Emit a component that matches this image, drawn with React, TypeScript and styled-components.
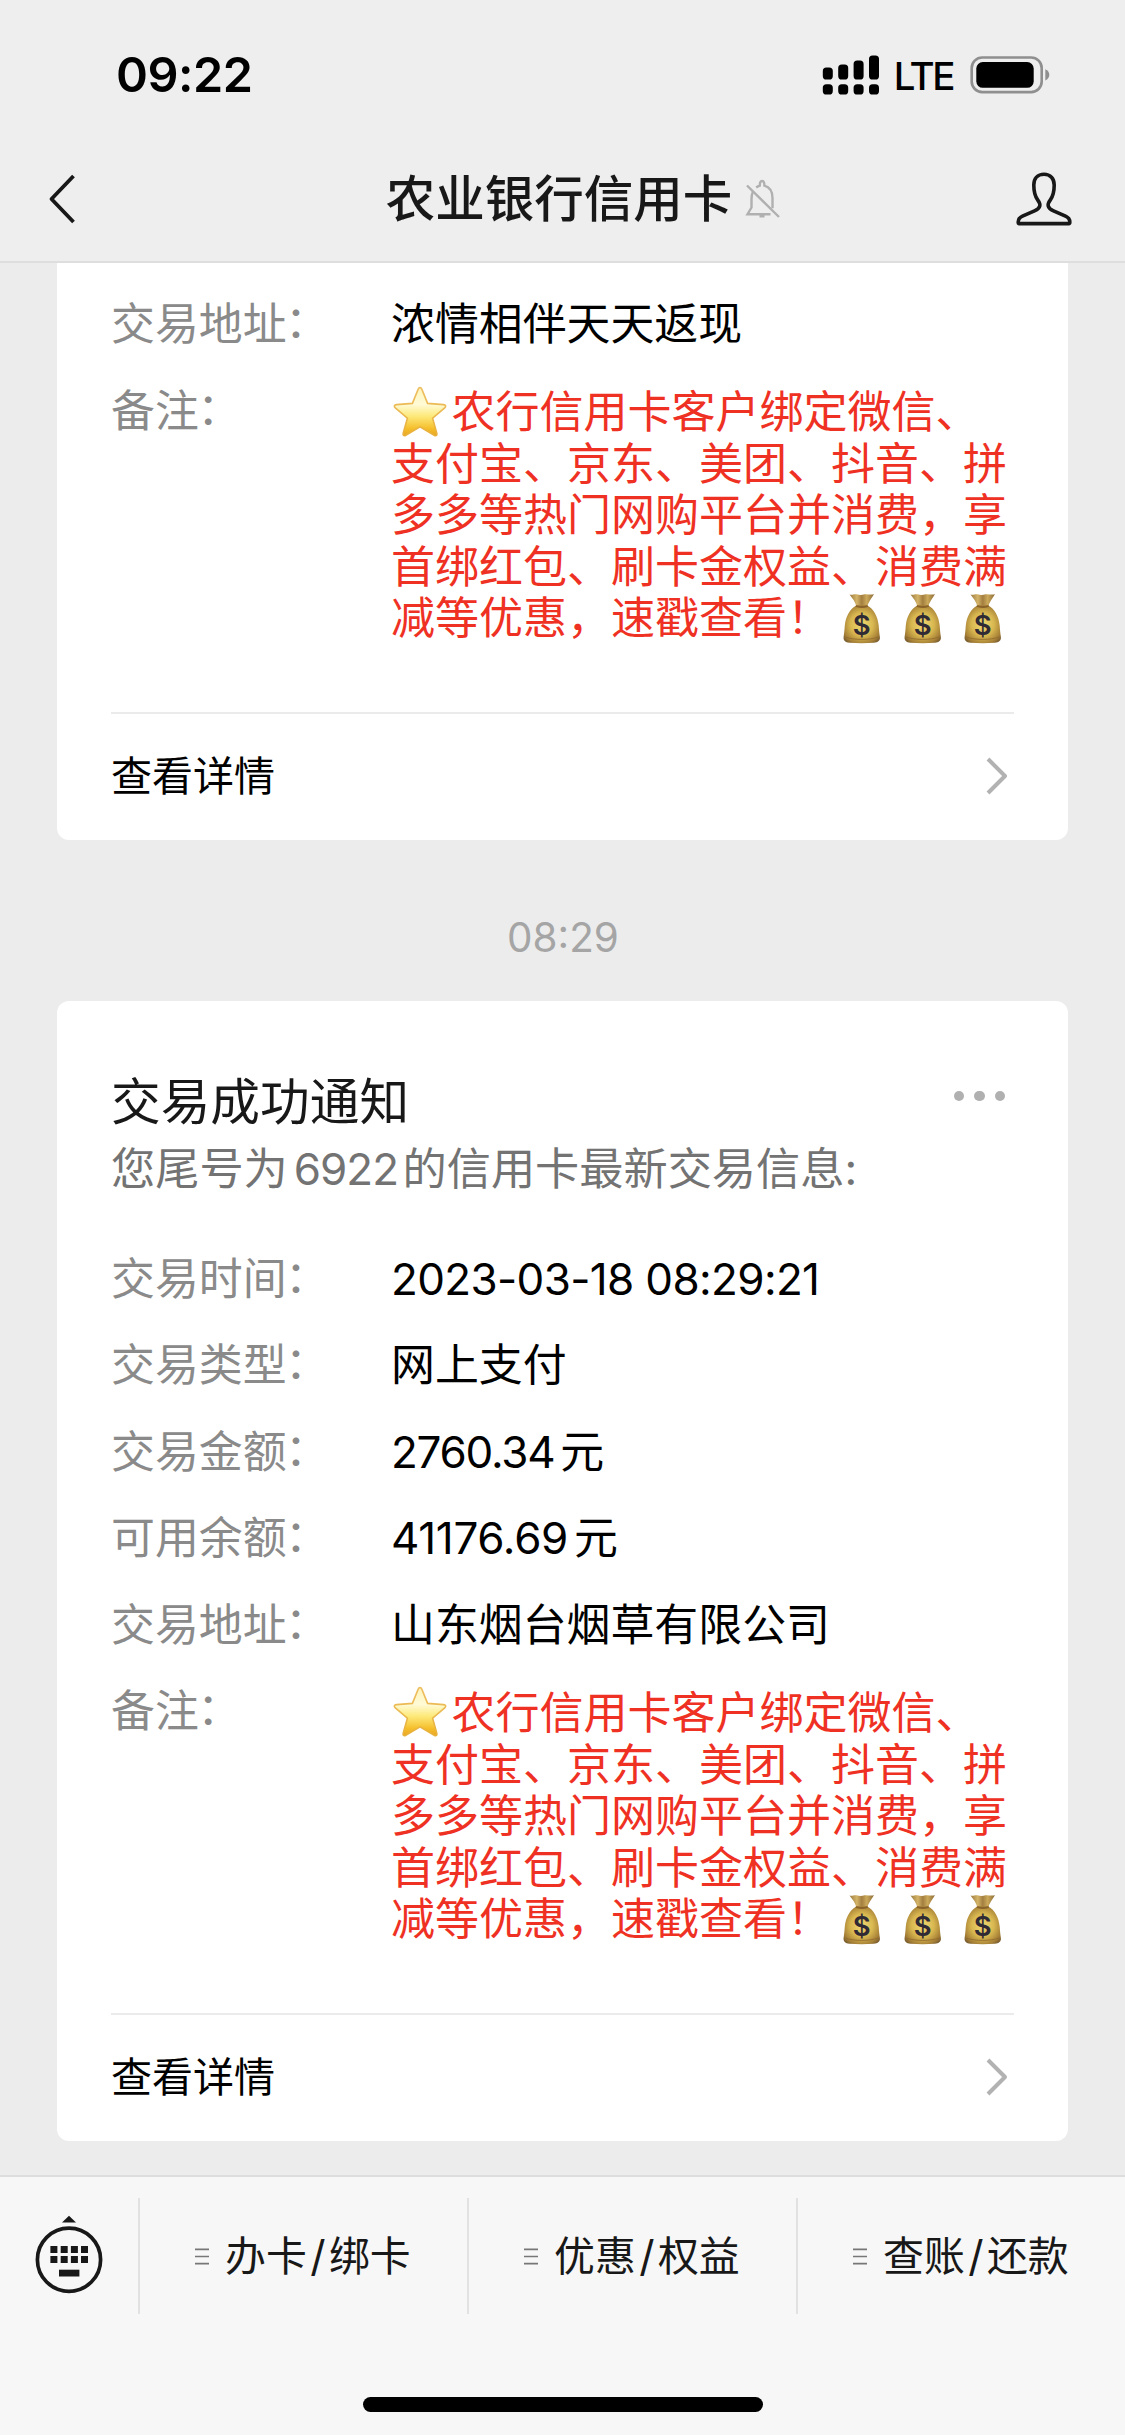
import React from "react";
import styled, { createGlobalStyle } from "styled-components";

const Global = createGlobalStyle`
  * { box-sizing: border-box; }
  html, body { margin: 0; padding: 0; background: #ececec; }
  body {
    font-family: Inter, "Noto Sans CJK SC", sans-serif;
    text-spacing-trim: space-all;
    text-autospace: no-autospace;
    -webkit-font-smoothing: antialiased;
  }
  svg { display: block; flex: none; }
`;

const Screen = styled.div`
  width: 1125px;
  height: 2435px;
  display: flex;
  flex-direction: column;
  background: #ececec;
  overflow: hidden;
`;

const Header = styled.header`
  flex: none;
  height: 263px;
  background: #eeeeee;
  border-bottom: 2px solid #dedede;
`;

const StatusBar = styled.div`
  height: 149px;
  padding: 0 74px 0 116px;
  display: flex;
  align-items: center;
  justify-content: space-between;
`;

const Clock = styled.div`
  font-size: 48.5px;
  font-weight: 600;
  letter-spacing: -0.5px;
  color: #000;
`;

const StatusIcons = styled.div`
  display: flex;
  align-items: center;
`;

const Network = styled.span`
  margin: 2px 17px 0 14px;
  font-size: 38.5px;
  font-weight: 500;
  letter-spacing: -2.4px;
  line-height: 46px;
  color: #000;
`;

const NavBar = styled.nav`
  height: 100px;
  padding: 0 52px 0 48px;
  display: grid;
  grid-template-columns: 100px 1fr 100px;
  align-items: center;
`;

const Title = styled.h1`
  margin: 0;
  display: flex;
  align-items: center;
  justify-content: center;
  gap: 13px;
  padding-left: 46px;
  font-size: 49.5px;
  font-weight: 500;
  line-height: 60px;
  white-space: nowrap;
  color: #181818;
`;

const NavEnd = styled.div`
  display: flex;
  justify-content: flex-end;
`;

const Chat = styled.main`
  flex: 1;
  min-height: 0;
  padding: 0 57px;
`;

const Card = styled.section<{ $cut?: boolean }>`
  background: #fff;
  border-radius: ${(p) => (p.$cut ? "0 0 12px 12px" : "12px")};
  padding: ${(p) => (p.$cut ? "35px" : "68px")} 54px 0;
`;

const Stamp = styled.time`
  display: flex;
  align-items: center;
  justify-content: center;
  height: 161px;
  padding: 36px 0 0 1px;
  font-size: 40.4px;
  line-height: 50px;
  color: #a5a5a5;
`;

const CardHead = styled.div`
  display: flex;
  justify-content: space-between;
  align-items: flex-start;
`;

const CardTitle = styled.h2`
  margin: 0;
  font-size: 49.7px;
  font-weight: 400;
  line-height: 66px;
  color: #181818;
`;

const Dots = styled.div`
  display: flex;
  gap: 10px;
  padding: 22px 9px 0 0;
`;

const Dot = styled.i`
  width: 10.4px;
  height: 10.4px;
  border-radius: 50%;
  background: #b0b0b0;
`;

const Subtitle = styled.p`
  margin: 1px 0 51px;
  font-size: 44.2px;
  line-height: 66px;
  white-space: nowrap;
  color: #737373;
`;

const Rows = styled.dl`
  margin: 0;
  display: flex;
  flex-direction: column;
  gap: 34.5px;
`;

const Row = styled.div`
  display: grid;
  grid-template-columns: 280px 1fr;
  font-size: 43.9px;
  line-height: 52px;
  white-space: nowrap;
`;

const Label = styled.dt`
  color: #8a8a8a;
`;

const Colon = styled.span`
  margin-left: -1.5px;
  line-height: 0;
  vertical-align: 2px;
`;

const Value = styled.dd`
  margin: 0;
  color: #000;
`;

const Memo = styled.dd`
  margin: 2.5px 0 0;
  font-size: 44px;
  line-height: 51.6px;
  color: #ef3124;
`;

const MemoLine = styled.div`
  display: flex;
  height: 51.6px;

  svg { margin-top: -1.5px; }
`;

const Num = styled.span<{ $before?: number; $after?: number; $spacing?: number }>`
  font-size: 44px;
  letter-spacing: ${(p) => p.$spacing ?? -1.2}px;
  margin-left: ${(p) => p.$before ?? 0}px;
  margin-right: ${(p) => p.$after ?? 0}px;
`;

const Detail = styled.a`
  margin-top: 67px;
  height: 128px;
  display: flex;
  align-items: center;
  justify-content: space-between;
  border-top: 2px solid #ebebeb;
  padding: 0 6px 2px 0;
  font-size: 41px;
  line-height: 50px;
  color: #000;
`;

const Footer = styled.footer`
  flex: none;
  height: 260px;
  display: flex;
  flex-direction: column;
  align-items: center;
  background: #f7f7f7;
  border-top: 2px solid #dddddd;
`;

const MenuBar = styled.div`
  width: 100%;
  height: 116px;
  margin-top: 21px;
  display: grid;
  grid-template-columns: 138px repeat(3, 329px);
`;

const KeyboardCell = styled.div`
  display: flex;
  justify-content: center;
  padding-top: 17px;
`;

const MenuItem = styled.div`
  display: flex;
  align-items: center;
  border-left: 2px solid #e2e2e2;
  padding-left: 55px;
  font-size: 40.9px;
  line-height: 50px;
  white-space: nowrap;
  color: #181818;
`;

const MenuText = styled.span`
  margin-left: 16px;
`;

const Slash = styled.span`
  margin: 0 3.4px;
  font-size: 42.5px;
`;

const HomeBar = styled.div`
  width: 400px;
  height: 15px;
  margin-top: 83px;
  border-radius: 8px;
  background: #000;
`;

const SignalIcon = () => (
  <svg width="58" height="40" viewBox="0 0 58 40">
    {[
      [0.8, 12.5],
      [16.2, 9.5],
      [31.6, 5.5],
      [47, 0.5],
    ].map(([x, y]) => (
      <React.Fragment key={x}>
        <rect x={x} y={y} width="10" height={24.5 - y} rx="3.6" />
        <rect x={x} y="29.2" width="10" height="10.3" rx="3.6" />
      </React.Fragment>
    ))}
  </svg>
);

const BatteryIcon = () => (
  <svg width="81" height="38" viewBox="0 0 81 38">
    <rect x="1.7" y="1.5" width="70" height="34.6" rx="10.5" fill="none" stroke="#8f8f8f" strokeWidth="2.6" />
    <rect x="6.3" y="6" width="57.4" height="25.8" rx="6.5" />
    <path d="M75.3 13.2c2.6 1 4 3.200 4 5.600s-1.400 4.600-4 5.600z" fill="#8f8f8f" />
  </svg>
);

const BackIcon = () => (
  <svg width="28" height="50" viewBox="0 0 28 50" fill="none" stroke="#181818" strokeWidth="3.8">
    <path d="M25.500 2 3.500 25l22 23" strokeLinejoin="round" />
  </svg>
);

const MutedBell = () => (
  <svg width="36" height="40" viewBox="0 0 36 40" fill="none" stroke="#b0b0b0" strokeWidth="2.4">
    <path d="M8 12.500C6.800 15 6.500 17.500 6.500 20v8.500L2.500 35.200H25.500M11.200 8.500C12.500 7.500 13.500 7 14.800 6.600 14.800 3.500 15.600 2 17 2s2.400 1.500 2.400 4.600c5.400 1.500 8.100 6 8.100 12.400v10.200" />
    <path d="M2 6.500 34 38M14.500 37.300h5" />
  </svg>
);

const PersonIcon = () => (
  <svg width="58" height="56" viewBox="0 0 58 56" fill="none" stroke="#181818" strokeWidth="3.6" strokeLinejoin="round">
    <path d="M29 3.200c-6.400 0-10.200 4.500-10.200 10.800 0 7 .8 10.500 3.700 14.600 2 2.800 2.800 4 2.300 6.200-.5 2.500-2.600 3.800-5.300 5L7.500 45.200C4.500 46.600 3.200 48.200 3.200 51v.6c0 .7.300 1 1 1h49.600c.7 0 1-.3 1-1V51c0-2.800-1.300-4.400-4.300-5.800L38.500 39.800c-2.700-1.200-4.800-2.500-5.300-5-.5-2.200.3-3.400 2.300-6.200 2.900-4.100 3.700-7.600 3.700-14.600C39.200 7.700 35.400 3.200 29 3.200Z" />
  </svg>
);

const ChevronIcon = () => (
  <svg width="22" height="38" viewBox="0 0 22 38" fill="none" stroke="#b2b2b2" strokeWidth="4">
    <path d="M2 2l17 17L2 36" strokeLinejoin="round" />
  </svg>
);

const StarIcon = () => (
  <svg width="60.500" height="52" viewBox="0 0 60.500 52">
    <defs>
      <linearGradient id="starFill" x1="0" y1="0" x2="0" y2="1">
        <stop offset="0" stopColor="#fff3b8" />
        <stop offset="0.35" stopColor="#fffbd6" />
        <stop offset="0.6" stopColor="#fde978" />
        <stop offset="0.85" stopColor="#f5bf2c" />
        <stop offset="1" stopColor="#e9a51f" />
      </linearGradient>
      <linearGradient id="starEdge" x1="0" y1="0" x2="0" y2="1">
        <stop offset="0" stopColor="#edbf62" />
        <stop offset="1" stopColor="#e8b13c" />
      </linearGradient>
    </defs>
    <path
      d="M29 1.600c1 0 1.500.8 1.900 1.800l5.700 14 15.900 1.200c2.300.2 2.900 1.700 1.200 3.200L41.600 32.200l4.200 14.900c.6 2.300-.7 3.200-2.600 2.100L29 40.900l-14.200 8.300c-1.900 1.100-3.200.2-2.600-2.100l4.200-14.900L4.300 21.800c-1.700-1.500-1.100-3 1.200-3.200l15.900-1.200 5.700-14c.4-1 .9-1.800 1.900-1.800Z"
      fill="url(#starFill)"
      stroke="url(#starEdge)"
      strokeWidth="1.600"
    />
  </svg>
);

const MoneyBag = () => (
  <svg width="60.7" height="52" viewBox="0 0 60.7 52">
    <defs>
      <radialGradient id="bagFill" cx="0.5" cy="0.5" r="0.62">
        <stop offset="0" stopColor="#f0d872" />
        <stop offset="0.5" stopColor="#d8b750" />
        <stop offset="0.85" stopColor="#a68036" />
        <stop offset="1" stopColor="#7e6030" />
      </radialGradient>
      <linearGradient id="bagNeck" x1="0" y1="0" x2="1" y2="0">
        <stop offset="0" stopColor="#9a7a40" />
        <stop offset="0.3" stopColor="#d4b468" />
        <stop offset="0.5" stopColor="#a37e40" />
        <stop offset="0.7" stopColor="#cba95a" />
        <stop offset="1" stopColor="#8b6a36" />
      </linearGradient>
    </defs>
    <path d="M18.500 2.500c3 .8 4.500-.8 7-.2 3 .8 5 .9 8 0 2.500-.6 5 .8 9.500-.1-2.500 4-5.600 7.800-7 12.800H25.500C24.500 10 21.500 6.500 18.500 2.500Z" fill="url(#bagNeck)" />
    <path d="M25.300 13.500h11c6.500 3.500 10.500 11 11.400 20 .3 4 .6 8 1.200 11.500.5 3.500-2 5.500-6 5.800-8 .5-16.500.5-24.500 0-4-.3-6.300-2.300-5.800-5.800.6-3.500.9-7.500 1.200-11.500.9-9 5-16.500 11.500-20Z" fill="url(#bagFill)" />
    <path d="M25.500 14.200c3.500 1 7.500 1 10.600 0" fill="none" stroke="#8a632b" strokeWidth="1.800" strokeLinecap="round" />
    <path d="M14.500 45c8 3.200 24.500 3.200 32.500 0" fill="none" stroke="#8f682c" strokeWidth="0.8" />
    <text x="30.800" y="43" textAnchor="middle" fontFamily="Inter, sans-serif" fontSize="27.500" fontWeight="600" fill="#2f2a33">
      $
    </text>
  </svg>
);

const KeyboardIcon = () => (
  <svg width="70" height="80" viewBox="0 0 70 80" fill="#181818">
    <path d="M28 7.500 35 .8l7 6.700z" />
    <circle cx="35" cy="44.700" r="31.600" fill="none" stroke="#181818" strokeWidth="3.700" />
    {[16.4, 26.700, 36.900, 47].map((x) => (
      <React.Fragment key={x}>
        <rect x={x} y="31" width="7" height="7" />
        <rect x={x} y="41" width="7" height="7" />
      </React.Fragment>
    ))}
    <rect x="25" y="54.700" width="20.400" height="6.800" />
  </svg>
);

const ListIcon = () => (
  <svg width="14" height="17" viewBox="0 0 14 17" stroke="#777" strokeWidth="1.700">
    <path d="M0 1.300h14M0 8.500h14M0 15.600h14" />
  </svg>
);

const Promo = () => (
  <Row>
    <Label>
      备注<Colon>：</Colon>
    </Label>
    <Memo>
      <MemoLine>
        <StarIcon />
        农行信用卡客户绑定微信、
      </MemoLine>
      <MemoLine>支付宝、京东、美团、抖音、拼</MemoLine>
      <MemoLine>多多等热门网购平台并消费，享</MemoLine>
      <MemoLine>首绑红包、刷卡金权益、消费满</MemoLine>
      <MemoLine>
        减等优惠，速戳查看！
        <MoneyBag />
        <MoneyBag />
        <MoneyBag />
      </MemoLine>
    </Memo>
  </Row>
);

const DetailLink = () => (
  <Detail>
    查看详情
    <ChevronIcon />
  </Detail>
);

const Field = ({ label, children }: { label: string; children: React.ReactNode }) => (
  <Row>
    <Label>
      {label}
      <Colon>：</Colon>
    </Label>
    <Value>{children}</Value>
  </Row>
);

const menus: [string, string][] = [
  ["办卡", "绑卡"],
  ["优惠", "权益"],
  ["查账", "还款"],
];

export default function App() {
  return (
    <Screen>
      <Global />
      <Header>
        <StatusBar>
          <Clock>09:22</Clock>
          <StatusIcons>
            <SignalIcon />
            <Network>LTE</Network>
            <BatteryIcon />
          </StatusIcons>
        </StatusBar>
        <NavBar>
          <BackIcon />
          <Title>
            农业银行信用卡
            <MutedBell />
          </Title>
          <NavEnd>
            <PersonIcon />
          </NavEnd>
        </NavBar>
      </Header>

      <Chat>
        <Card $cut>
          <Rows>
            <Field label="交易地址">浓情相伴天天返现</Field>
            <Promo />
          </Rows>
          <DetailLink />
        </Card>

        <Stamp>08:29</Stamp>

        <Card>
          <CardHead>
            <CardTitle>交易成功通知</CardTitle>
            <Dots>
              <Dot />
              <Dot />
              <Dot />
            </Dots>
          </CardHead>
          <Subtitle>
            您尾号为
            <Num $before={6} $after={4.5} $spacing={-1}>
              6922
            </Num>
            的信用卡最新交易信息:
          </Subtitle>
          <Rows>
            <Field label="交易时间">
              <Num $spacing={-0.65}>2023-03-18 08:29:21</Num>
            </Field>
            <Field label="交易类型">网上支付</Field>
            <Field label="交易金额">
              <Num $after={6} $spacing={-1.25}>
                2760.34
              </Num>
              元
            </Field>
            <Field label="可用余额">
              <Num $after={6} $spacing={-0.3}>
                41176.69
              </Num>
              元
            </Field>
            <Field label="交易地址">山东烟台烟草有限公司</Field>
            <Promo />
          </Rows>
          <DetailLink />
        </Card>
      </Chat>

      <Footer>
        <MenuBar>
          <KeyboardCell>
            <KeyboardIcon />
          </KeyboardCell>
          {menus.map(([a, b]) => (
            <MenuItem key={a}>
              <ListIcon />
              <MenuText>
                {a}
                <Slash>/</Slash>
                {b}
              </MenuText>
            </MenuItem>
          ))}
        </MenuBar>
        <HomeBar />
      </Footer>
    </Screen>
  );
}
